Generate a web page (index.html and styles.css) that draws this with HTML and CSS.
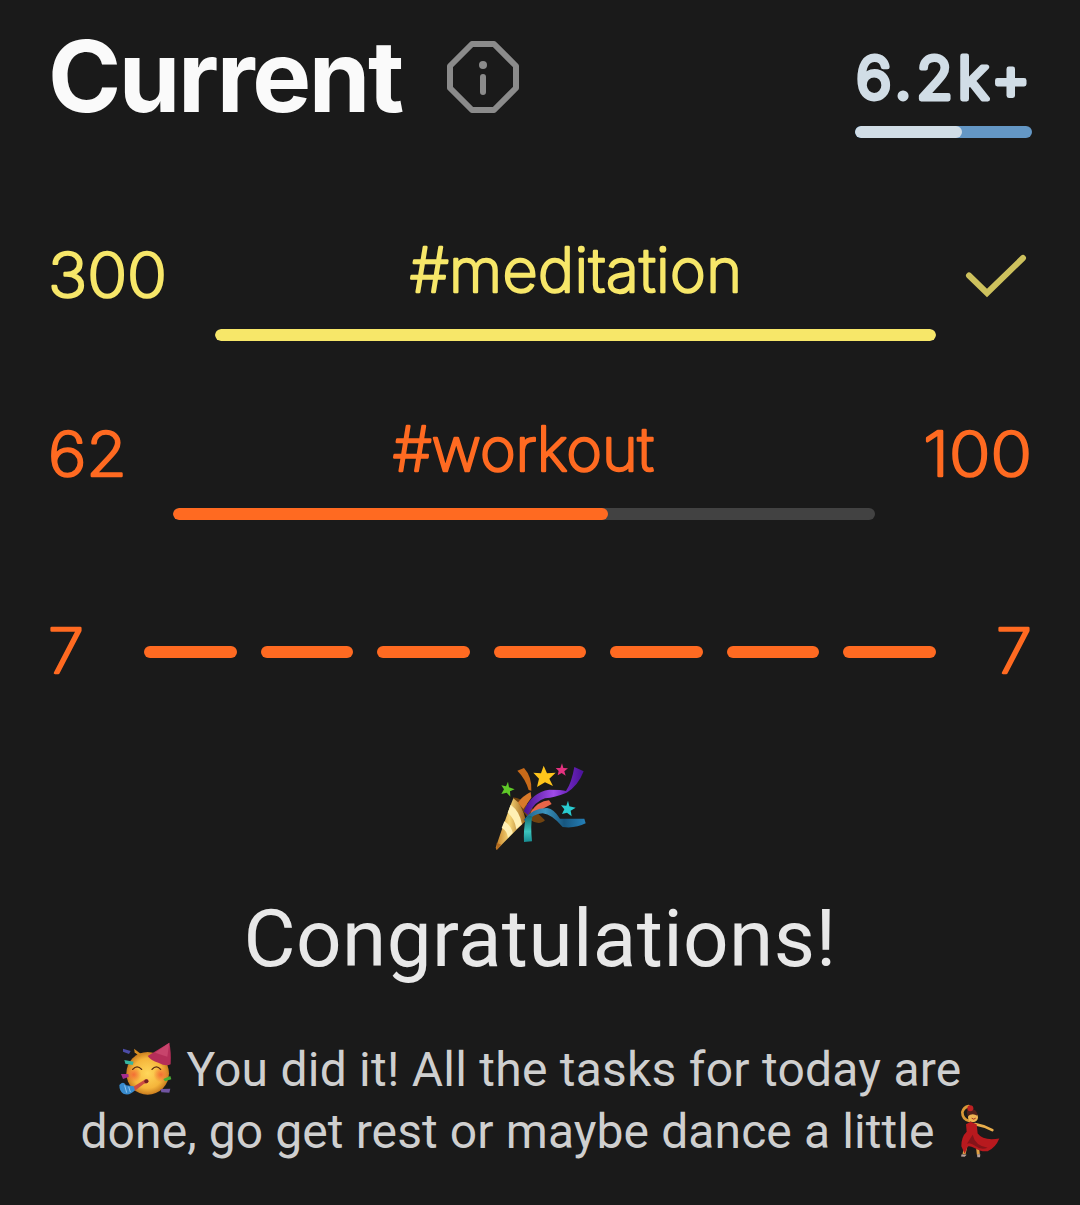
FILE: index.html
```html
<!DOCTYPE html>
<html lang="en">
<head>
<meta charset="utf-8">
<title>Current</title>
<link rel="stylesheet" href="styles.css">
</head>
<body>
<main class="screen">
  <header class="header">
    <h1 class="title">Current</h1>
    <svg class="info" viewBox="0 0 72 72" fill="none" stroke="#8b8b8b" stroke-width="6" stroke-linejoin="round" stroke-linecap="round">
      <path d="M25 3H47L69 25V47L47 69H25L3 47V25Z"/>
      <path d="M36 36V51"/>
      <circle cx="36" cy="24" r="4" fill="#8b8b8b" stroke="none"/>
    </svg>
    <div class="score">
      <svg class="label bold" width="177" height="72"><text x="1" y="58" textLength="174">6.2k+</text></svg>
      <div class="track score-track"><div class="fill" style="width:60.5%"></div></div>
    </div>
  </header>

  <section class="goal yellow">
    <svg class="label" width="117" height="80"><text x="0" y="65" textLength="119" lengthAdjust="spacingAndGlyphs">300</text></svg>
    <div class="progress meditation">
      <svg class="label" width="332" height="80"><text x="0" y="60" textLength="332">#meditation</text></svg>
      <div class="track"><div class="fill" style="width:100%"></div></div>
    </div>
    <svg class="check" viewBox="0 0 62 44" fill="none" stroke="#cdc15d" stroke-width="6" stroke-linecap="round"><path d="M4 21.5L22 39L58 4"/></svg>
  </section>

  <section class="goal orange">
    <svg class="label" width="77" height="80"><text x="0" y="65" textLength="79" lengthAdjust="spacingAndGlyphs">62</text></svg>
    <div class="progress workout">
      <svg class="label" width="262" height="80"><text x="0" y="60" textLength="261">#workout</text></svg>
      <div class="track"><div class="fill" style="width:62%"></div></div>
    </div>
    <svg class="label" width="108" height="80"><text x="0" y="65" textLength="109" lengthAdjust="spacingAndGlyphs">100</text></svg>
  </section>

  <section class="streak orange">
    <svg class="label" width="36" height="80"><text x="0" y="64" textLength="36" lengthAdjust="spacingAndGlyphs">7</text></svg>
    <div class="days"><i></i><i></i><i></i><i></i><i></i><i></i><i></i></div>
    <svg class="label" width="36" height="80"><text x="0" y="64" textLength="36" lengthAdjust="spacingAndGlyphs">7</text></svg>
  </section>

  <section class="done">
    <svg class="popper" viewBox="0 0 360 330">
      <defs>
        <linearGradient id="gold" x1="0" x2="1"><stop offset="0" stop-color="#c17b24"/><stop offset=".45" stop-color="#f8d878"/><stop offset="1" stop-color="#9b6018"/></linearGradient>
        <linearGradient id="purple" x1="0" x2="1"><stop offset="0" stop-color="#46118f"/><stop offset=".5" stop-color="#a04be8"/><stop offset=".72" stop-color="#6e26bd"/><stop offset="1" stop-color="#4a1299"/></linearGradient>
        <linearGradient id="blue" x1="0" x2="1"><stop offset="0" stop-color="#1b5c86"/><stop offset=".35" stop-color="#3c94bd"/><stop offset=".65" stop-color="#17567f"/><stop offset="1" stop-color="#2580b8"/></linearGradient>
        <linearGradient id="teal" x2="0" y2="1"><stop offset="0" stop-color="#136a72"/><stop offset=".6" stop-color="#3cc5bd"/><stop offset="1" stop-color="#178b91"/></linearGradient>
      </defs>
      <path d="M98 143C122 140 152 170 195 211C180 225 163 219 145 205Z" fill="#71430f"/>
      <path d="M112 62L132 54Q156 80 154 122L146 120Q136 86 112 62Z" fill="#c86a19"/>
      <path d="M113 158Q128 138 152 126L154 143L130 177Z" fill="#d8792a"/>
      <path d="M100 145Q125 160 138 212Q100 247 50 300L47 293Q78 200 100 145Z" fill="url(#gold)"/>
      <path d="M92 164Q120 185 126 223L109 238Q105 206 83 188ZM73 214Q95 228 98 249L84 263Q81 242 65 234Z" fill="#fff0b4"/>
      <path d="M50 278L64 284L50 300Z" fill="#b36b20"/>
      <path d="M154 184Q174 154 207 151L215 162Q193 171 175 189L150 197Z" fill="#e76549"/>
      <path d="M131 184Q155 126 208 119Q246 119 258 123Q275 98 283 51L311 64Q294 108 260 128Q225 142 195 145Q162 154 145 196Z" fill="url(#purple)"/>
      <path d="M131 210Q158 173 202 174Q222 177 240 206L313 206L317 220Q286 236 248 231Q216 193 188 190Q158 192 142 216Z" fill="url(#blue)"/>
      <path d="M137 206Q146 194 157 200Q151 224 156 274L132 276Q130 238 137 206Z" fill="url(#teal)"/>
      <path d="M191 47L201 70L227 68L208 86L219 108L195 97L171 111L177 86L160 68L183 70Z" fill="#ffc51b"/>
      <path d="M246 40L250 54L264 55L253 64L257 77L245 69L233 76L236 63L227 54L241 54Z" fill="#e43280"/>
      <path d="M84 95L87 112L104 118L90 124L91 140L80 128L64 132L72 118L64 106L78 109Z" fill="#5fc928"/>
      <path d="M264 152L268 169L287 173L272 182L275 199L261 188L246 192L253 178L243 166L259 167Z" fill="#29cbd0"/>
    </svg>
    <h2 class="congrats">Congratulations!</h2>
    <p class="message"><svg class="face" viewBox="30 36 162 162">
        <defs><radialGradient id="skin"><stop offset="0" stop-color="#ffd75b"/><stop offset=".7" stop-color="#f5b53b"/><stop offset="1" stop-color="#ca7d1f"/></radialGradient>
        <radialGradient id="blush"><stop offset="0" stop-color="#f36e35"/><stop offset="1" stop-color="#f36e35" stop-opacity="0"/></radialGradient></defs>
        <circle cx="119" cy="130" r="64" fill="url(#skin)"/>
        <circle cx="77" cy="134" r="23" fill="url(#blush)"/><circle cx="159" cy="134" r="23" fill="url(#blush)"/>
        <path d="M119 78L184 38Q190 65 188 103Q174 110 151 98Q129 92 119 78Z" fill="#b52e59"/>
        <path d="M141 68L184 38L178 80Z" fill="#c8446c"/>
        <path d="M74 118Q87 103 101 118M132 118Q145 103 158 118" fill="none" stroke="#5a2b12" stroke-width="4" stroke-linecap="round"/>
        <path d="M75 171L110 149Q122 145 122 154Q120 161 108 161L80 183Z" fill="#cd4d42"/>
        <circle cx="115" cy="154" r="6" fill="#742023"/>
        <path d="M34 165Q47 151 54 166L77 169L81 181Q64 199 46 191Q34 185 34 165Z" fill="#388bcd"/>
        <path d="M50 166L56 188M62 170L67 186" stroke="#8cc4f2" stroke-width="3"/>
        <path d="M45 56L68 63L63 72L45 65Z" fill="#4c4ca7"/><path d="M78 56L100 73L95 80L80 67Z" fill="#d68c20"/>
        <path d="M49 90L77 95L74 105L52 101Z" fill="#36b6a0"/><path d="M39 132L61 132L62 141L45 147Z" fill="#a32d8e"/>
        <path d="M166 147L187 138L190 148L171 154Z" fill="#48af35"/><path d="M158 177L187 176L184 188L160 187Z" fill="#7054a1"/>
      </svg><span class="first">You did it! All the tasks for today are</span><br><span class="second">done, go get rest or maybe dance a little</span><svg class="dancer" viewBox="50 26 126 164">
        <path d="M84 76Q63 71 63 50Q67 35 82 32" fill="none" stroke="#d99837" stroke-width="8" stroke-linecap="round"/>
        <path d="M101 86Q126 90 153 104" fill="none" stroke="#e9ae4c" stroke-width="8" stroke-linecap="round"/>
        <path d="M76 142L68 176M108 148L111 177" stroke="#e0a044" stroke-width="9"/>
        <circle cx="95" cy="65" r="15" fill="#eeb452"/>
        <path d="M79 62Q71 42 86 39Q109 41 108 61Q94 51 79 62Z" fill="#50201a"/><circle cx="87" cy="38" r="9" fill="#bd2022"/>
        <path d="M74 86L88 79L106 86L109 114Q126 137 174 129Q162 158 139 167Q117 169 101 158Q85 150 79 153L70 175L60 152Q60 124 76 109Z" fill="#b8191e"/>
        <path d="M94 118Q101 151 139 157Q118 165 101 151Q86 139 77 145Z" fill="#85141a"/>
        <path d="M91 68Q97 74 103 68" fill="none" stroke="#a33022" stroke-width="3"/>
        <path d="M61 176L76 178L70 184L59 183ZM107 176L117 176L116 185L108 185Z" fill="#b9a29a"/>
      </svg></p>
  </section>
</main>
</body>
</html>
```
FILE: styles.css
```css
* { box-sizing: border-box; }
body { margin: 0; background: #1a1a1a; }
.screen { width: 1080px; height: 1205px; padding: 0 48px; overflow: hidden; background: #1a1a1a; font-family: Roboto, sans-serif; }
.header { display: flex; height: 240px; padding-top: 41px; }
.title { width: 356px; margin: -25px 43px 0 0; color: #fafafa; font: 700 99px/120px Inter, sans-serif; letter-spacing: -2.4px; white-space: nowrap; }
.info { width: 72px; height: 72px; }
.score { width: 177px; margin-left: auto; color: #d1dde6; }
.label { display: block; flex: none; overflow: visible; fill: currentColor; stroke: currentColor; stroke-width: 2.5px; stroke-linejoin: round; font: 200 61px Inter, sans-serif; }
.bold { font-weight: 300; font-size: 59px; stroke-width: 4.8px; }
.track { width: 100%; height: 12px; border-radius: 6px; background: #424242; overflow: hidden; }
.fill { height: 100%; border-radius: 6px; background: currentColor; }
.score-track { margin-top: 13px; background: #6497c5; }
.yellow { color: #f7e769; }
.orange { color: #ff6a21; }
.goal { display: flex; height: 179px; padding-right: 1px; }
.goal > .label { margin-top: -8px; }
.progress { flex: 1; display: flex; flex-direction: column; align-items: center; }
.progress .label { margin-top: -8px; }
.progress .track { margin-top: 17px; }
.meditation { margin: 0 29px 0 50px; }
.workout { margin: 0 48px; }
.yellow.goal { padding-right: 5px; }
.check { width: 62px; height: 44px; margin-top: 14px; }
.streak { display: flex; justify-content: space-between; height: 153px; padding-top: 11px; }
.days { display: grid; grid-template-columns: repeat(7, 1fr); gap: 24px; width: 792px; padding-top: 37px; }
.days i { height: 12px; border-radius: 6px; background: currentColor; }
.done { text-align: center; }
.popper { display: block; width: 120px; height: 110px; margin: -1px auto 0; }
.congrats { margin: 31px 0 0; color: #e8e8e8; font: 400 80px/96px Roboto, sans-serif; letter-spacing: .4px; white-space: nowrap; }
.message { margin: 52px 0 0; color: #cfcfcf; font: 400 48px/62px Roboto, sans-serif; white-space: nowrap; }
.first { letter-spacing: .24px; }
.second { letter-spacing: .1px; }
.face { width: 54px; height: 54px; margin-right: 14px; vertical-align: -10px; }
.dancer { width: 42px; height: 55px; margin: -2px 0 0 23px; vertical-align: -11px; }
```
